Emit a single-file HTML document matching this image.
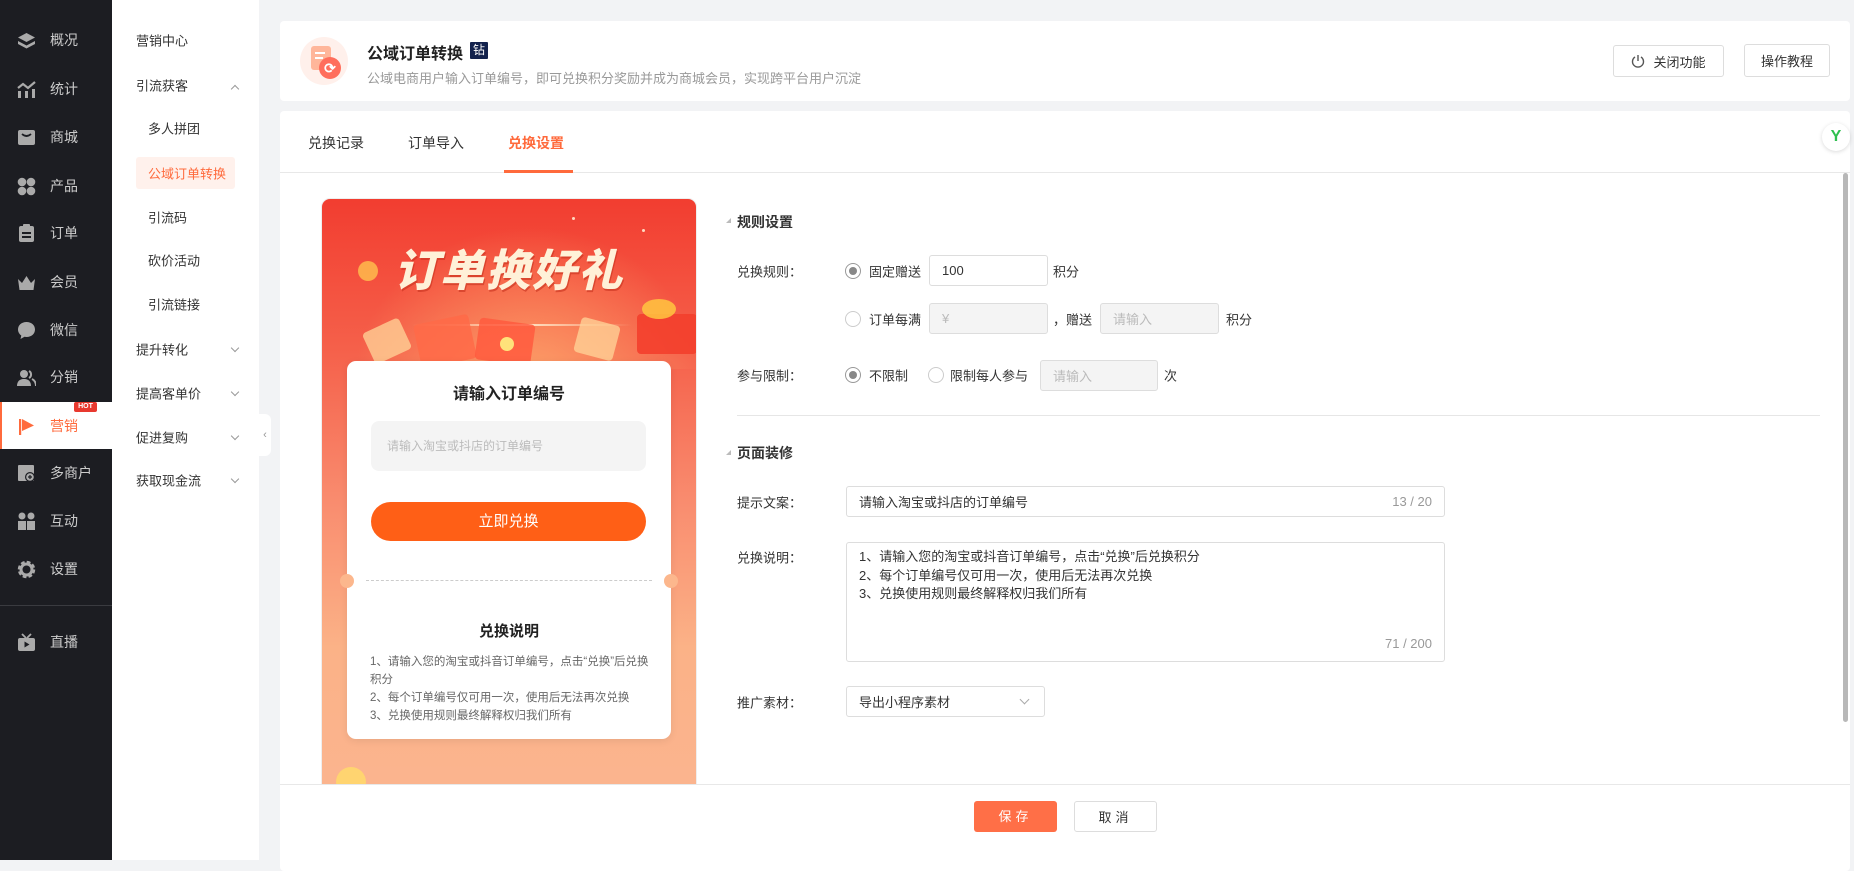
<!DOCTYPE html>
<html><head><meta charset="utf-8"><style>
*{box-sizing:border-box;margin:0;padding:0}
body{width:1854px;height:860px;overflow:hidden;background:#f2f3f5;font-family:"Liberation Sans","Noto Sans CJK SC",sans-serif;color:#333;position:relative;font-size:13px}
.abs{position:absolute}
.side{left:0;top:0;width:112px;height:860px;background:#1c1d22}
.mi{position:absolute;left:0;width:112px;height:40px;display:flex;align-items:center;color:#ccc;font-size:14px}
.mi .ic{width:19px;height:19px;margin-left:17px;margin-right:14px;display:flex;align-items:center;justify-content:center}
.sub{left:112px;top:0;width:147px;height:860px;background:#fff}
.si{position:absolute;left:24px;font-size:13px;color:#333;transform:translateY(-50%)}
.ss{left:36px}
.chev{position:absolute;left:120px;width:6px;height:6px;border-right:1px solid #999;border-bottom:1px solid #999;transform:rotate(45deg)}
.card{background:#fff;border-radius:4px}
.btn{position:absolute;border:1px solid #ddd;border-radius:3px;background:#fff;display:flex;align-items:center;justify-content:center;font-size:13px;color:#333}
.lbl{position:absolute;left:737px;font-size:13px;color:#333;transform:translateY(-50%)}
.radio{position:absolute;width:16px;height:16px;border:1px solid #ccc;border-radius:50%;background:#fff;transform:translateY(-50%)}
.radio.on{border-color:#999}
.radio.on::after{content:"";position:absolute;left:3px;top:3px;width:8px;height:8px;border-radius:50%;background:#888}
.t{position:absolute;font-size:13px;color:#333;transform:translateY(-50%);white-space:nowrap}
.inp{position:absolute;border:1px solid #ddd;border-radius:3px;background:#fff;font-size:13px;display:flex;align-items:center;padding-left:12px;color:#333}
.inp.dis{background:#f4f4f4;color:#bbb}
</style></head><body>

<div class="abs side"></div>
<div class="mi" style="top:20px"><div class="ic"><svg width="19" height="17" viewBox="0 0 19 17"><path d="M9.5 1L18 5.5 9.5 10 1 5.5z" fill="#aaa"/><path d="M1 9l8.5 4.5L18 9v3l-8.5 4.5L1 12z" fill="#aaa"/></svg></div>概况</div>
<div class="mi" style="top:69px"><div class="ic"><svg width="19" height="17" viewBox="0 0 19 17"><rect x="1" y="10" width="3" height="7" fill="#aaa"/><rect x="8" y="10" width="3" height="7" fill="#aaa"/><rect x="15" y="8" width="3" height="9" fill="#aaa"/><path d="M1 7l5-4 5 4 7-6" stroke="#aaa" stroke-width="2.2" fill="none"/></svg></div>统计</div>
<div class="mi" style="top:117px"><div class="ic"><svg width="19" height="17" viewBox="0 0 19 17"><rect x="1" y="1" width="17" height="15" rx="2" fill="#aaa"/><path d="M5 5q4.5 4 9 0" stroke="#1c1d22" stroke-width="1.8" fill="none"/></svg></div>商城</div>
<div class="mi" style="top:166px"><div class="ic"><svg width="19" height="19" viewBox="0 0 19 19"><circle cx="5" cy="5" r="4.3" fill="#aaa"/><circle cx="14" cy="5" r="4.3" fill="#aaa"/><circle cx="5" cy="14" r="4.3" fill="#aaa"/><circle cx="14" cy="14" r="4.3" fill="#aaa"/></svg></div>产品</div>
<div class="mi" style="top:213px"><div class="ic"><svg width="17" height="19" viewBox="0 0 17 19"><rect x="1" y="2" width="15" height="16" rx="2" fill="#aaa"/><rect x="5" y="0" width="7" height="4" rx="1" fill="#aaa"/><rect x="4" y="8" width="9" height="2" fill="#1c1d22"/><rect x="4" y="12" width="9" height="2" fill="#1c1d22"/></svg></div>订单</div>
<div class="mi" style="top:262px"><div class="ic"><svg width="19" height="17" viewBox="0 0 19 17"><path d="M1 5l4 4 4.5-7 4.5 7 4-4-1.5 11h-14z" fill="#aaa"/></svg></div>会员</div>
<div class="mi" style="top:310px"><div class="ic"><svg width="19" height="19" viewBox="0 0 19 19"><path d="M9.5 1C4.5 1 1 4.3 1 8.5c0 2.5 1.3 4.6 3.3 6L3.5 18l4-2.2c.6.1 1.3.2 2 .2 5 0 8.5-3.3 8.5-7.5S14.5 1 9.5 1z" fill="#aaa"/></svg></div>微信</div>
<div class="mi" style="top:357px"><div class="ic"><svg width="19" height="17" viewBox="0 0 19 17"><circle cx="7" cy="5" r="4" fill="#aaa"/><path d="M0 17c0-5 3-7 7-7s7 2 7 7z" fill="#aaa"/><path d="M12 2a4 4 0 010 7M15 10c2 1 4 3 4 7" stroke="#aaa" stroke-width="2" fill="none"/></svg></div>分销</div>
<div class="abs" style="left:0;top:402px;width:112px;height:47px;background:#fff;border-left:2px solid #ff6a3c"></div>
<div class="mi" style="top:406px;color:#ff6a3c"><div class="ic"><svg width="19" height="19" viewBox="0 0 19 19"><rect x="2" y="2" width="2.2" height="16" fill="#ff6a3c"/><path d="M5 2l12 6.5L5 14z" fill="#ff6a3c"/></svg></div>营销</div>
<div class="abs" style="left:74px;top:402px;width:23px;height:10px;background:#e8392f;border-radius:2px;color:#fff;font-size:7px;font-weight:bold;text-align:center;line-height:10px">HOT</div>
<div class="mi" style="top:453px"><div class="ic"><svg width="19" height="19" viewBox="0 0 19 19"><rect x="1" y="1" width="16" height="16" rx="1" fill="#aaa"/><circle cx="13" cy="13" r="5" fill="#1c1d22"/><circle cx="13" cy="13" r="3.8" fill="#aaa"/><path d="M13 11v4M11 13h4" stroke="#1c1d22" stroke-width="1.2"/></svg></div>多商户</div>
<div class="mi" style="top:501px"><div class="ic"><svg width="19" height="19" viewBox="0 0 19 19"><circle cx="5" cy="4" r="3.5" fill="#aaa"/><circle cx="14" cy="4" r="3.5" fill="#aaa"/><path d="M1 9h8v9H1zM10 9h8v9h-8z" fill="#aaa"/></svg></div>互动</div>
<div class="mi" style="top:549px"><div class="ic"><svg width="19" height="19" viewBox="0 0 19 19"><circle cx="9.5" cy="9.5" r="7" fill="none" stroke="#aaa" stroke-width="3.5" stroke-dasharray="3.5 2"/><circle cx="9.5" cy="9.5" r="5.5" fill="none" stroke="#aaa" stroke-width="3"/></svg></div>设置</div>
<div class="abs" style="left:0;top:605px;width:112px;height:1px;background:#3a3b40"></div>
<div class="mi" style="top:622px"><div class="ic"><svg width="19" height="19" viewBox="0 0 19 19"><path d="M5 1l4 4M14 1l-4 4" stroke="#aaa" stroke-width="1.8"/><rect x="1" y="5" width="17" height="13" rx="2" fill="#aaa"/><path d="M7.5 8.5v6l5-3z" fill="#1c1d22"/></svg></div>直播</div>

<div class="abs sub">
<div class="si" style="top:40px">营销中心</div>
<div class="si" style="top:85px">引流获客</div><div class="chev" style="top:86px;transform:rotate(225deg)"></div>
<div class="si ss" style="top:128px">多人拼团</div>
<div class="abs" style="left:24px;top:157px;width:99px;height:32px;background:#fff1ec;border-radius:3px"></div>
<div class="si ss" style="top:173px;color:#ff6a3c">公域订单转换</div>
<div class="si ss" style="top:217px">引流码</div>
<div class="si ss" style="top:260px">砍价活动</div>
<div class="si ss" style="top:304px">引流链接</div>
<div class="si" style="top:349px">提升转化</div><div class="chev" style="top:345px"></div>
<div class="si" style="top:393px">提高客单价</div><div class="chev" style="top:389px"></div>
<div class="si" style="top:437px">促进复购</div><div class="chev" style="top:433px"></div>
<div class="si" style="top:480px">获取现金流</div><div class="chev" style="top:476px"></div>
</div>
<div class="abs" style="left:259px;top:414px;width:12px;height:42px;background:#fff;border-radius:0 6px 6px 0;color:#999;font-size:11px;display:flex;align-items:center;justify-content:center">‹</div>

<div class="abs card" style="left:280px;top:21px;width:1570px;height:80px"></div>
<div class="abs" style="left:300px;top:37px;width:48px;height:48px;border-radius:50%;background:#fff0eb"></div>
<div class="abs" style="left:311px;top:46px;width:20px;height:24px;border-radius:3px;background:#ffb69a"></div>
<div class="abs" style="left:315px;top:52px;width:10px;height:2px;background:#fff"></div>
<div class="abs" style="left:315px;top:57px;width:8px;height:2px;background:#fff"></div>
<div class="abs" style="left:319px;top:57px;width:22px;height:22px;border-radius:50%;background:#ff6e5c;color:#fff;font-size:14px;line-height:22px;text-align:center;font-weight:bold">⟳</div>
<div class="abs" style="left:367px;top:40px;font-size:16px;font-weight:bold;color:#222">公域订单转换</div>
<div class="abs" style="left:470px;top:42px;width:18px;height:17px;background:#13224d;color:#fff;font-size:12px;line-height:17px;text-align:center;border-radius:1px">钻</div>
<div class="abs" style="left:367px;top:68px;font-size:13px;color:#999">公域电商用户输入订单编号，即可兑换积分奖励并成为商城会员，实现跨平台用户沉淀</div>
<div class="btn" style="left:1613px;top:45px;width:111px;height:32px"><svg width="14" height="14" viewBox="0 0 14 14" style="margin-right:8px"><path d="M4 3a5.5 5.5 0 106 0" stroke="#555" stroke-width="1.4" fill="none"/><path d="M7 1v6" stroke="#555" stroke-width="1.4"/></svg>关闭功能</div>
<div class="btn" style="left:1744px;top:44px;width:86px;height:33px">操作教程</div>

<div class="abs card" style="left:280px;top:111px;width:1570px;height:760px"></div>
<div class="abs" style="left:308px;top:133px;font-size:14px">兑换记录</div>
<div class="abs" style="left:408px;top:133px;font-size:14px">订单导入</div>
<div class="abs" style="left:508px;top:133px;font-size:14px;color:#ff6a3c;font-weight:bold">兑换设置</div>
<div class="abs" style="left:280px;top:172px;width:1570px;height:1px;background:#e8e8e8"></div>
<div class="abs" style="left:504px;top:170px;width:69px;height:3px;background:#ff6a3c"></div>
<div class="abs" style="left:1822px;top:123px;width:28px;height:28px;border-radius:50%;background:#fff;box-shadow:0 1px 4px rgba(0,0,0,.15);color:#2fbf4f;font-weight:bold;font-size:16px;text-align:center;line-height:28px">Y</div>
<div class="abs" style="left:1843px;top:173px;width:5px;height:549px;background:#b8b8b8;border-radius:3px"></div>

<div class="abs" style="left:321px;top:198px;width:376px;height:600px;border-radius:9px;overflow:hidden;background:linear-gradient(180deg,#f23d30 0%,#f5604a 25%,#f98b6e 50%,#fbb287 75%,#fbb48f 100%);border:1px solid #eee">
 <div class="abs" style="left:0;top:0;width:376px;height:170px;background:radial-gradient(ellipse at 55% 110%,rgba(255,176,112,.8) 0%,rgba(255,140,80,0) 60%)"></div>
 <div class="abs" style="left:72px;top:36px;font-size:44px;font-weight:900;font-style:italic;color:#fff1d8;letter-spacing:2px;text-shadow:1px 2px 0 rgba(200,50,30,.6)">订单换好礼</div>
 <div class="abs" style="left:90px;top:125px;width:220px;height:2px;background:linear-gradient(90deg,rgba(255,230,200,0),#ffe6c8,rgba(255,230,200,0))"></div>
 <div class="abs" style="left:36px;top:62px;width:20px;height:20px;border-radius:50%;background:#ffc24d;opacity:.8"></div>
 <div class="abs" style="left:95px;top:120px;width:56px;height:45px;transform:rotate(-12deg);background:#ff6a48;border-radius:4px;opacity:.85"></div>
 <div class="abs" style="left:155px;top:122px;width:56px;height:42px;transform:rotate(8deg);background:#ff5a3e;border-radius:4px;opacity:.85"></div>
 <div class="abs" style="left:45px;top:125px;width:40px;height:34px;transform:rotate(-25deg);background:#ffd59a;border-radius:4px;opacity:.75"></div>
 <div class="abs" style="left:255px;top:122px;width:40px;height:36px;transform:rotate(15deg);background:#ffd59a;border-radius:4px;opacity:.75"></div>
 <div class="abs" style="left:315px;top:115px;width:60px;height:40px;background:#f33f2c;border-radius:4px;opacity:.9"></div>
 <div class="abs" style="left:320px;top:100px;width:34px;height:20px;background:#ffc640;border-radius:50%;opacity:.85"></div>
 <div class="abs" style="left:178px;top:138px;width:14px;height:14px;border-radius:50%;background:#ffe27a"></div>
 <div class="abs" style="left:14px;top:568px;width:30px;height:30px;border-radius:50%;background:#ffd470"></div>
 <div class="abs" style="left:320px;top:30px;width:3px;height:3px;border-radius:50%;background:#ffd9c0"></div>
 <div class="abs" style="left:250px;top:18px;width:3px;height:3px;border-radius:50%;background:#ffd9c0"></div>
 <div class="abs" style="left:40px;top:300px;width:3px;height:3px;border-radius:50%;background:#ffd9c0"></div>
</div>
<div class="abs" style="left:347px;top:361px;width:324px;height:378px;background:#fff;border-radius:9px;box-shadow:0 2px 8px rgba(0,0,0,.08)"></div>
<div class="abs" style="left:340px;top:574px;width:14px;height:14px;border-radius:50%;background:#fcb78d"></div>
<div class="abs" style="left:664px;top:574px;width:14px;height:14px;border-radius:50%;background:#fcb78d"></div>
<div class="abs" style="left:366px;top:580px;width:286px;border-top:1px dashed #ccc"></div>
<div class="abs" style="left:347px;top:380px;width:324px;text-align:center;font-size:16px;font-weight:bold;color:#222">请输入订单编号</div>
<div class="abs" style="left:371px;top:421px;width:275px;height:50px;background:#f4f4f4;border-radius:8px;font-size:12px;color:#bbb;padding-left:16px;line-height:50px">请输入淘宝或抖店的订单编号</div>
<div class="abs" style="left:371px;top:502px;width:275px;height:39px;background:#ff5f16;border-radius:20px;color:#fff;font-size:15px;text-align:center;line-height:39px">立即兑换</div>
<div class="abs" style="left:347px;top:620px;width:324px;text-align:center;font-size:15px;font-weight:bold;color:#222">兑换说明</div>
<div class="abs" style="left:370px;top:653px;width:285px;font-size:11.5px;color:#666;line-height:18px">1、请输入您的淘宝或抖音订单编号，点击“兑换”后兑换积分<br>2、每个订单编号仅可用一次，使用后无法再次兑换<br>3、兑换使用规则最终解释权归我们所有</div>

<div class="abs" style="left:726px;top:218px;width:0;height:0;border-left:5px solid transparent;border-bottom:5px solid #bbb"></div>
<div class="abs" style="left:737px;top:212px;font-size:14px;font-weight:bold;color:#333">规则设置</div>
<div class="lbl" style="top:271px">兑换规则：</div>
<div class="radio on" style="left:845px;top:271px"></div><div class="t" style="left:869px;top:271px">固定赠送</div>
<div class="inp" style="left:929px;top:255px;width:119px;height:31px">100</div><div class="t" style="left:1053px;top:271px">积分</div>
<div class="radio" style="left:845px;top:319px"></div><div class="t" style="left:869px;top:319px">订单每满</div>
<div class="inp dis" style="left:929px;top:303px;width:119px;height:31px">¥</div><div class="t" style="left:1053px;top:319px">，赠送</div>
<div class="inp dis" style="left:1100px;top:303px;width:119px;height:31px">请输入</div><div class="t" style="left:1226px;top:319px">积分</div>
<div class="lbl" style="top:375px">参与限制：</div>
<div class="radio on" style="left:845px;top:375px"></div><div class="t" style="left:869px;top:375px">不限制</div>
<div class="radio" style="left:928px;top:375px"></div><div class="t" style="left:950px;top:375px">限制每人参与</div>
<div class="inp dis" style="left:1040px;top:360px;width:118px;height:31px">请输入</div><div class="t" style="left:1164px;top:375px">次</div>
<div class="abs" style="left:737px;top:415px;width:1083px;height:1px;background:#e6e6e6"></div>
<div class="abs" style="left:726px;top:450px;width:0;height:0;border-left:5px solid transparent;border-bottom:5px solid #bbb"></div>
<div class="abs" style="left:737px;top:443px;font-size:14px;font-weight:bold;color:#333">页面装修</div>
<div class="lbl" style="top:502px">提示文案：</div>
<div class="inp" style="left:846px;top:486px;width:599px;height:31px">请输入淘宝或抖店的订单编号<span style="position:absolute;right:12px;color:#999">13 / 20</span></div>
<div class="lbl" style="top:557px">兑换说明：</div>
<div class="abs" style="left:846px;top:542px;width:599px;height:120px;border:1px solid #ddd;border-radius:3px;padding:5px 12px;line-height:18.5px;font-size:13px">1、请输入您的淘宝或抖音订单编号，点击“兑换”后兑换积分<br>2、每个订单编号仅可用一次，使用后无法再次兑换<br>3、兑换使用规则最终解释权归我们所有<span style="position:absolute;right:12px;bottom:8px;color:#999">71 / 200</span></div>
<div class="lbl" style="top:702px">推广素材：</div>
<div class="inp" style="left:846px;top:686px;width:199px;height:31px">导出小程序素材<span style="position:absolute;right:16px;top:9px;width:7px;height:7px;border-right:1px solid #aaa;border-bottom:1px solid #aaa;transform:rotate(45deg)"></span></div>

<div class="abs" style="left:280px;top:784px;width:1570px;height:76px;background:#fff;border-top:1px solid #e8e8e8"></div>
<div class="abs" style="left:974px;top:801px;width:83px;height:31px;background:#ff6f47;border-radius:3px;color:#fff;font-size:13px;text-align:center;line-height:31px;letter-spacing:4px">保存</div>
<div class="btn" style="left:1074px;top:801px;width:83px;height:31px;letter-spacing:4px">取消</div>
</body></html>
